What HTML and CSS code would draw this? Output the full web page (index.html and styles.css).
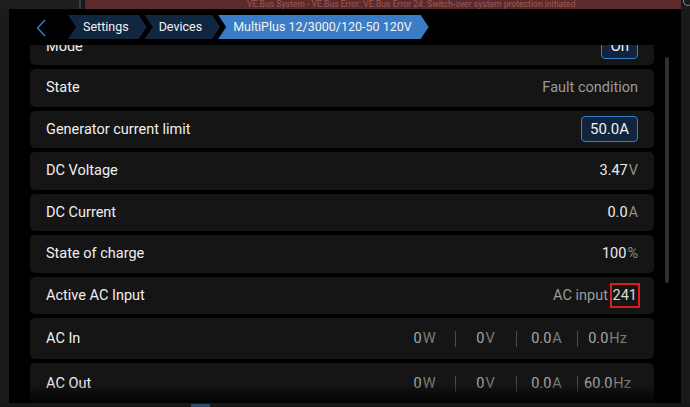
FILE: index.html
```html
<!DOCTYPE html>
<html lang="en">
<head>
    <meta charset="UTF-8">
    <title>MultiPlus device page</title>
    <link rel="stylesheet" href="styles.css">
</head>
<body>
<div class="top-strip">
    <div class="top-left"></div>
    <div class="top-line"></div>
    <div class="banner"><span>VE.Bus System - VE.Bus Error: VE.Bus Error 24: Switch-over system protection initiated</span></div>
    <div class="top-right"><span class="ring"></span></div>
</div>
<div class="middle">
    <div class="side side-left"></div>
    <div class="window">
        <div class="header">
            <svg class="back" width="10" height="18" viewBox="0 0 10 18">
                <path d="M9 1 L1.5 9 L9 17" fill="none" stroke="#3a86d8" stroke-width="1.3"/>
            </svg>
            <div class="crumbs">
                <div class="crumb">Settings</div>
                <div class="crumb">Devices</div>
                <div class="crumb current">MultiPlus 12/3000/120-50 120V</div>
            </div>
        </div>
        <div class="content">
            <div class="list">
                <div class="rows">
                    <div class="row"><span class="label">Mode</span><span class="btn">On</span></div>
                    <div class="row"><span class="label">State</span><span class="dim">Fault condition</span></div>
                    <div class="row"><span class="label">Generator current limit</span><span class="btn">50.0A</span></div>
                    <div class="row"><span class="label">DC Voltage</span><span class="val">3.47<span class="unit">V</span></span></div>
                    <div class="row"><span class="label">DC Current</span><span class="val">0.0<span class="unit">A</span></span></div>
                    <div class="row"><span class="label">State of charge</span><span class="val">100<span class="unit">%</span></span></div>
                    <div class="row"><span class="label">Active AC Input</span><span class="dim">AC input <span class="mark">241</span></span></div>
                    <div class="row tall">
                        <span class="label">AC In</span>
                        <div class="cols">
                            <span class="col">0<span class="unit">W</span></span>
                            <span class="col">0<span class="unit">V</span></span>
                            <span class="col">0.0<span class="unit">A</span></span>
                            <span class="col">0.0<span class="unit">Hz</span></span>
                        </div>
                    </div>
                    <div class="row tall">
                        <span class="label">AC Out</span>
                        <div class="cols">
                            <span class="col">0<span class="unit">W</span></span>
                            <span class="col">0<span class="unit">V</span></span>
                            <span class="col">0.0<span class="unit">A</span></span>
                            <span class="col">60.0<span class="unit">Hz</span></span>
                        </div>
                    </div>
                </div>
                <div class="fade"></div>
            </div>
            <div class="scroll"><div class="thumb"></div></div>
        </div>
    </div>
    <div class="side side-right"></div>
</div>
<div class="bottom-strip"><span class="tab"></span></div>
</body>
</html>
```

FILE: styles.css
```css
body {
    margin: 0;
    width: 690px;
    height: 407px;
    overflow: hidden;
    background: #1a1a1a;
    font-family: Roboto, "Liberation Sans", sans-serif;
    color: #ececec;
}
.top-strip {
    display: flex;
    height: 9px;
    overflow: hidden;
}
.top-left {
    width: 79px;
    background: #1f1f1f;
}
.top-line {
    width: 2px;
    background: #3c3c3c;
    margin-right: 4px;
}
.banner {
    flex: 1;
    background: #5b2a2a;
    color: #9c5a5a;
    font-size: 8.6px;
    line-height: 12px;
    padding-left: 162px;
    white-space: nowrap;
    overflow: hidden;
}
.banner span {
    display: block;
    margin-top: -2px;
}
.top-right {
    width: 9px;
    background: #1c1c1c;
    position: relative;
}
.ring {
    position: absolute;
    left: 2px;
    top: -4px;
    width: 8px;
    height: 8px;
    border: 1px solid #888;
    border-radius: 50%;
}
.middle {
    display: flex;
    height: 394px;
}
.side {
    width: 9px;
    background: #1b1b1b;
}
.side-right {
    background: #191919;
}
.window {
    flex: 1;
    background: #000;
    display: flex;
    flex-direction: column;
}
.header {
    height: 36px;
    flex-shrink: 0;
    display: flex;
    align-items: flex-start;
    padding-left: 27px;
}
.back {
    margin-top: 10px;
}
.crumbs {
    display: flex;
    margin-top: 6px;
    margin-left: 22px;
}
.crumb {
    height: 24px;
    line-height: 24px;
    font-size: 12.5px;
    white-space: nowrap;
    color: #f2f2f2;
    background: #11263f;
    padding: 0 18px 0 15px;
    margin-right: -2px;
    clip-path: polygon(0 0, calc(100% - 8px) 0, 100% 50%, calc(100% - 8px) 100%, 0 100%, 8px 50%);
}
.crumb:nth-child(2) {
    padding-left: 14px;
}
.crumb.current {
    background: #3a7cc6;
    padding: 0 17px 0 15px;
}
.content {
    flex: 1;
    display: flex;
    min-height: 0;
}
.list {
    position: relative;
    margin-left: 21px;
    width: 624px;
    overflow: hidden;
}
.rows {
    margin-top: -17.5px;
    display: flex;
    flex-direction: column;
    gap: 4px;
}
.row {
    height: 37.5px;
    flex-shrink: 0;
    background: #151515;
    border-radius: 5px;
    display: flex;
    align-items: center;
    justify-content: space-between;
    padding: 0 16px;
    font-size: 14.5px;
}
.row.tall {
    height: 41px;
}
.label {
    color: #f0f0f0;
}
.dim {
    color: #9b9b9b;
}
.val {
    color: #ececec;
}
.unit {
    color: #8e8e8e;
    margin-left: 1px;
}
.btn {
    height: 24px;
    line-height: 24px;
    padding: 0 8px;
    border: 1px solid #3a80d0;
    border-radius: 4px;
    background: #10243d;
    color: #f0f0f0;
    font-size: 15px;
}
.mark {
    display: inline-block;
    color: #dcdcdc;
    line-height: 21px;
    padding: 0 1px 0 1px;
    border: 2px solid #e01b1b;
    margin-right: -2px;
    margin-left: -2px;
}
.cols {
    display: flex;
}
.col {
    width: 61px;
    text-align: center;
    color: #a6a6a6;
    position: relative;
}
.col + .col::before {
    content: "";
    position: absolute;
    left: 0;
    top: 1px;
    height: 16px;
    border-left: 1px solid #4a4a4a;
}
.col .unit {
    color: #7c7c7c;
}
.fade {
    position: absolute;
    left: 0;
    right: 0;
    bottom: 0;
    height: 20px;
    background: linear-gradient(to bottom, rgba(0, 0, 0, 0), rgba(0, 0, 0, 0.9));
}
.scroll {
    margin-left: 11px;
    padding-top: 12px;
}
.thumb {
    width: 4px;
    height: 226px;
    border-radius: 2px;
    background: #2f2f2f;
}
.bottom-strip {
    height: 4px;
    background: #161616;
    position: relative;
}
.tab {
    position: absolute;
    left: 191px;
    top: 1px;
    width: 19px;
    height: 3px;
    background: #2b4a6a;
}
```
